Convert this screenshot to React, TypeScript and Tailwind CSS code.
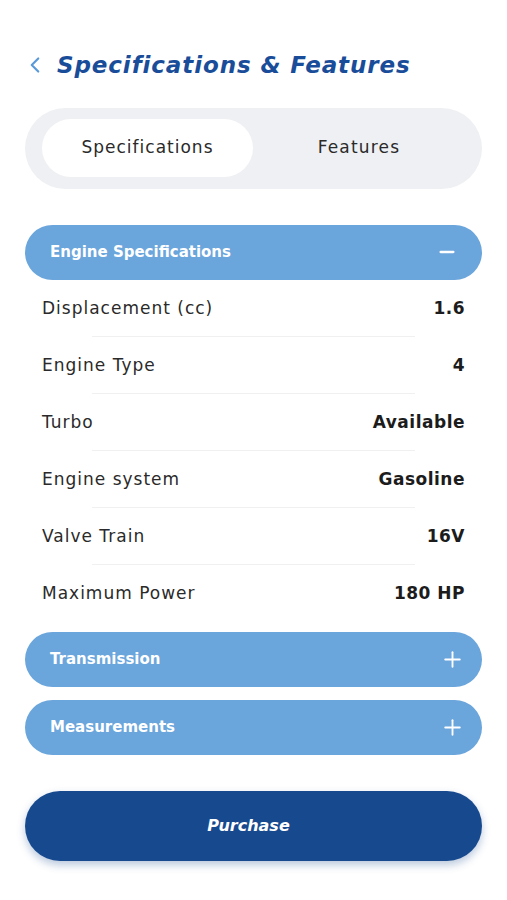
import { ChevronLeft, Minus, Plus } from 'lucide-react';

const specs = [
  { label: 'Displacement (cc)', value: '1.6' },
  { label: 'Engine Type', value: '4' },
  { label: 'Turbo', value: 'Available' },
  { label: 'Engine system', value: 'Gasoline' },
  { label: 'Valve Train', value: '16V' },
  { label: 'Maximum Power', value: '180 HP' },
];

const font = { fontFamily: '"DejaVu Sans", "Liberation Sans", sans-serif' };

const SectionHeader = ({ title, open }: { title: string; open?: boolean }) => (
  <div
    className={`flex h-[55px] items-center justify-between rounded-full bg-[#6aa5dc] pl-[25px] ${
      open ? 'pr-[24px]' : 'pr-[17px]'
    }`}
  >
    <span className="text-[15px] font-bold text-white">{title}</span>
    {open ? (
      <Minus className="h-[22px] w-[22px] text-white" strokeWidth={2.5} />
    ) : (
      <Plus className="h-[25px] w-[25px] text-white" strokeWidth={1.8} />
    )}
  </div>
);

export default function App() {
  return (
    <div className="min-h-[900px] w-[507px] bg-white px-[25px] pt-[48px]" style={font}>
      {/* Header */}
      <div className="flex items-center gap-[9px]">
        <ChevronLeft className="ml-[-3px] h-[26px] w-[26px] text-[#5a9ad8]" strokeWidth={2} />
        <h1 className="text-[23px] font-bold italic tracking-[0.9px] text-[#1a4d99]">
          Specifications &amp; Features
        </h1>
      </div>

      {/* Tabs */}
      <div className="mt-[25px] flex h-[81px] items-center rounded-full bg-[#eff0f3] px-[17px]">
        <div className="flex h-[58px] w-[211px] items-center justify-center rounded-full bg-white text-[17px] tracking-[1px] text-[#2a2a2a]">
          Specifications
        </div>
        <div className="flex flex-1 items-center justify-center text-[17px] tracking-[1.2px] text-[#2a2a2a]">
          Features
        </div>
      </div>

      {/* Engine */}
      <div className="mt-[36px]">
        <SectionHeader title="Engine Specifications" open />
        <div className="px-[17px]">
          {specs.map((s, i) => (
            <div key={s.label}>
              <div className="flex h-[56px] items-center justify-between pt-[2px] text-[17px] text-[#2a2a2a]">
                <span className="tracking-[1px]">{s.label}</span>
                <span className="font-bold tracking-[0.5px] text-[#1c1c1c]">{s.value}</span>
              </div>
              {i < specs.length - 1 && <div className="mx-[50px] h-px bg-[#f0f0f0]" />}
            </div>
          ))}
        </div>
      </div>

      <div className="mt-[11px] flex flex-col gap-[13px]">
        <SectionHeader title="Transmission" />
        <SectionHeader title="Measurements" />
      </div>

      <button className="mt-[36px] flex h-[70px] w-full items-center justify-center rounded-full bg-[#17498f] pr-[10px] text-[16px] font-bold italic text-white shadow-[0_4px_8px_rgba(23,73,143,0.3)]">
        Purchase
      </button>
    </div>
  );
}
